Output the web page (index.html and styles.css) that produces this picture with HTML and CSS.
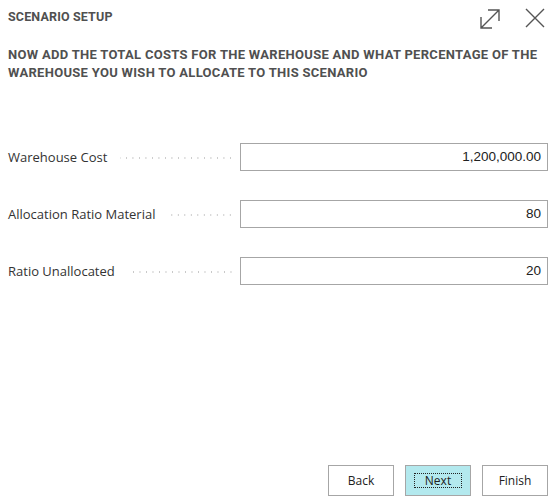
FILE: index.html
```html
<!DOCTYPE html>
<html>
<head>
<meta charset="utf-8">
<link rel="stylesheet" href="styles.css">
</head>
<body>
<div class="dialog">
  <header class="head">
    <div class="title">SCENARIO SETUP</div>
    <div class="tools">
      <svg class="icon" width="22" height="22" viewBox="0 0 22 22"><path d="M2 20 L20 2 M9 2 H20 V13 M2 9 V20 H13" fill="none" stroke="#555" stroke-width="1.4"/></svg>
      <svg class="icon" width="20" height="20" viewBox="0 0 20 20"><path d="M1 1 L19 19 M19 1 L1 19" fill="none" stroke="#555" stroke-width="1.4"/></svg>
    </div>
  </header>
  <h2 class="instr">NOW ADD THE TOTAL COSTS FOR THE WAREHOUSE AND WHAT PERCENTAGE OF THE WAREHOUSE YOU WISH TO ALLOCATE TO THIS SCENARIO</h2>
  <div class="form">
    <div class="row"><label class="lbl">Warehouse Cost</label><span class="dots"></span><div class="field">1,200,000.00</div></div>
    <div class="row"><label class="lbl">Allocation Ratio Material</label><span class="dots"></span><div class="field">80</div></div>
    <div class="row"><label class="lbl">Ratio Unallocated</label><span class="dots"></span><div class="field">20</div></div>
  </div>
  <footer class="actions">
    <button class="btn">Back</button>
    <button class="btn primary"><span class="focus">Next</span></button>
    <button class="btn">Finish</button>
  </footer>
</div>
</body>
</html>
```
FILE: styles.css
```css
html, body { margin: 0; padding: 0; background: #fff; }
body { width: 558px; height: 503px; overflow: hidden; font-family: "Open Sans", "Noto Sans", sans-serif; }
.dialog { display: flex; flex-direction: column; height: 503px; padding: 0 10px 0 8px; box-sizing: border-box; }
.head { display: flex; justify-content: space-between; align-items: flex-start; height: 42px; }
.title { font-family: "Roboto", sans-serif; font-weight: 700; font-size: 12.5px; color: #505050; margin-top: 9px; letter-spacing: 0.15px; }
.tools { display: flex; gap: 24px; margin-top: 8px; margin-right: 3px; }
.icon { display: block; }
.instr { font-family: "Roboto", sans-serif; font-weight: 700; font-size: 13px; line-height: 18px; color: #505050; margin: 4px 0 0 0; letter-spacing: 0.3px; }
.form { display: flex; flex-direction: column; gap: 29px; margin-top: 61px; }
.row { display: flex; align-items: center; height: 28px; }
.lbl { font-size: 13px; color: #333; white-space: nowrap; }
.dots { flex: 1; height: 2px; margin: 2px 6px 0 13px; background-image: radial-gradient(circle, #c8c8c8 0.8px, transparent 1px); background-size: 6.5px 2px; background-repeat: repeat-x; background-position: right center; min-width: 20px; }
.field { width: 308px; height: 28px; box-sizing: border-box; border: 1px solid #a6a6a6; text-align: right; padding: 0 6px; font-family: "Liberation Sans", Arial, sans-serif; font-size: 13.5px; line-height: 26px; color: #212121; }
.actions { margin-top: auto; margin-bottom: 7px; display: flex; justify-content: flex-end; gap: 11px; }
.btn { width: 66px; height: 31px; border: 1px solid #a6a6a6; background: #fff; font-family: "Open Sans", sans-serif; font-size: 12px; color: #212121; padding: 0; display: flex; align-items: center; justify-content: center; }
.btn.primary { background: #b3e9ee; }
.focus { border: 1px dotted #222; width: 46px; height: 13px; display: flex; align-items: center; justify-content: center; }
```
